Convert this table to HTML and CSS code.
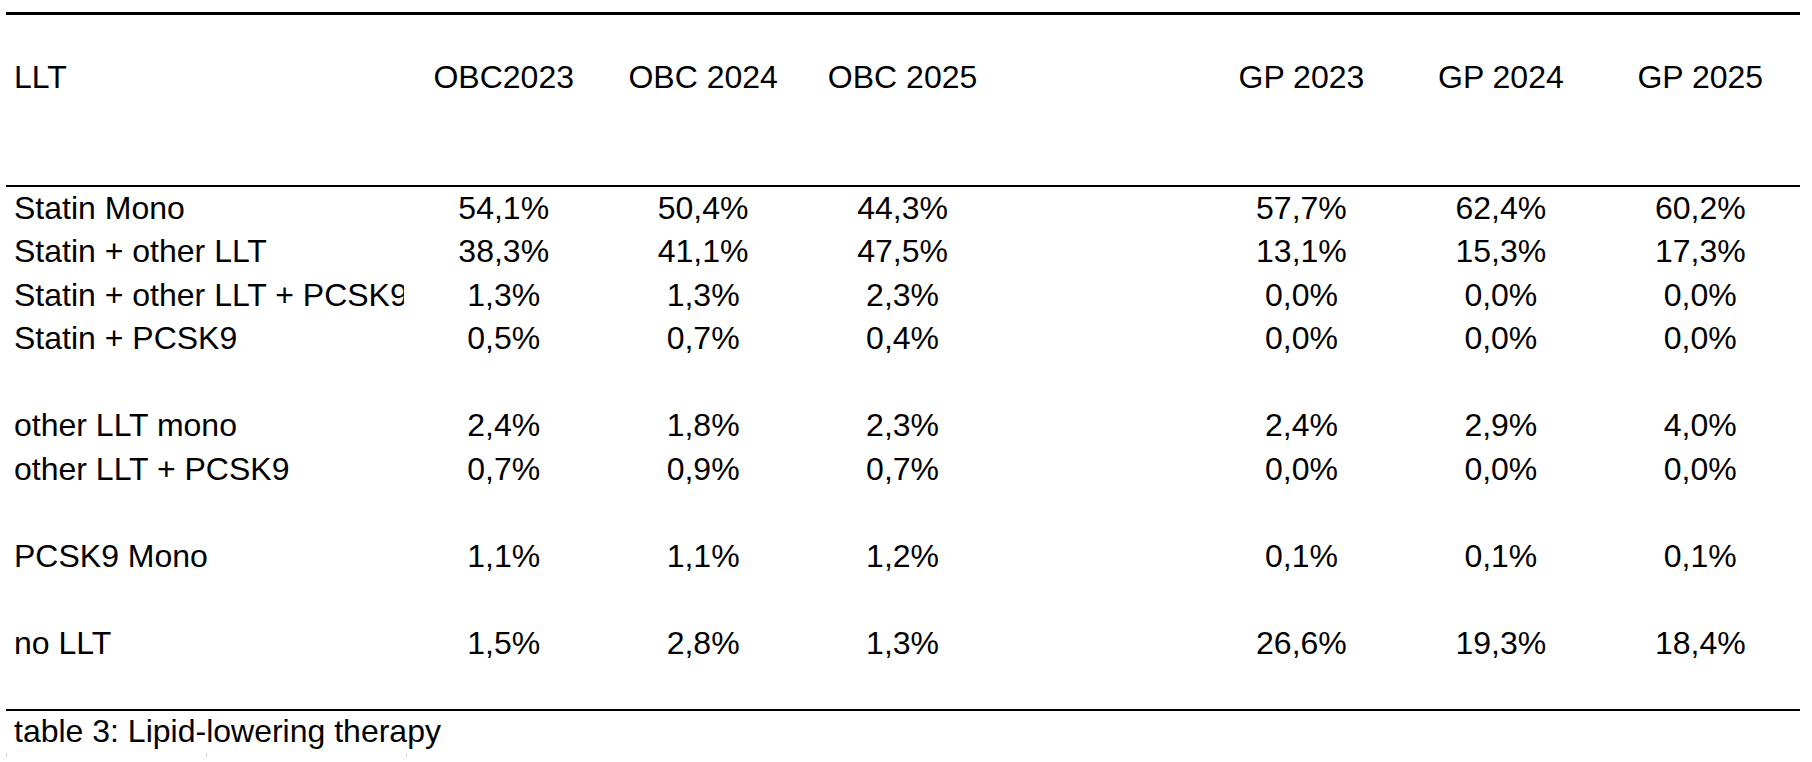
FILE: index.html
```html
<!DOCTYPE html>
<html lang="en">
<head>
<meta charset="utf-8">
<title>table 3: Lipid-lowering therapy</title>
<link rel="stylesheet" href="styles.css">
</head>
<body>
<div class="sheet">
  <div class="head">
    <div class="row">
      <div class="label">LLT</div>
      <div class="cell">OBC2023</div>
      <div class="cell">OBC 2024</div>
      <div class="cell">OBC 2025</div>
      <div class="cell"></div>
      <div class="cell">GP 2023</div>
      <div class="cell">GP 2024</div>
      <div class="cell">GP 2025</div>
    </div>
  </div>
  <div class="body">
    <div class="row">
      <div class="label">Statin Mono</div>
      <div class="cell">54,1%</div><div class="cell">50,4%</div><div class="cell">44,3%</div><div class="cell"></div>
      <div class="cell">57,7%</div><div class="cell">62,4%</div><div class="cell">60,2%</div>
    </div>
    <div class="row">
      <div class="label">Statin + other LLT</div>
      <div class="cell">38,3%</div><div class="cell">41,1%</div><div class="cell">47,5%</div><div class="cell"></div>
      <div class="cell">13,1%</div><div class="cell">15,3%</div><div class="cell">17,3%</div>
    </div>
    <div class="row">
      <div class="label">Statin + other LLT + PCSK9</div>
      <div class="cell">1,3%</div><div class="cell">1,3%</div><div class="cell">2,3%</div><div class="cell"></div>
      <div class="cell">0,0%</div><div class="cell">0,0%</div><div class="cell">0,0%</div>
    </div>
    <div class="row">
      <div class="label">Statin + PCSK9</div>
      <div class="cell">0,5%</div><div class="cell">0,7%</div><div class="cell">0,4%</div><div class="cell"></div>
      <div class="cell">0,0%</div><div class="cell">0,0%</div><div class="cell">0,0%</div>
    </div>
    <div class="row blank"></div>
    <div class="row">
      <div class="label">other LLT mono</div>
      <div class="cell">2,4%</div><div class="cell">1,8%</div><div class="cell">2,3%</div><div class="cell"></div>
      <div class="cell">2,4%</div><div class="cell">2,9%</div><div class="cell">4,0%</div>
    </div>
    <div class="row">
      <div class="label">other LLT + PCSK9</div>
      <div class="cell">0,7%</div><div class="cell">0,9%</div><div class="cell">0,7%</div><div class="cell"></div>
      <div class="cell">0,0%</div><div class="cell">0,0%</div><div class="cell">0,0%</div>
    </div>
    <div class="row blank"></div>
    <div class="row">
      <div class="label">PCSK9 Mono</div>
      <div class="cell">1,1%</div><div class="cell">1,1%</div><div class="cell">1,2%</div><div class="cell"></div>
      <div class="cell">0,1%</div><div class="cell">0,1%</div><div class="cell">0,1%</div>
    </div>
    <div class="row blank"></div>
    <div class="row">
      <div class="label">no LLT</div>
      <div class="cell">1,5%</div><div class="cell">2,8%</div><div class="cell">1,3%</div><div class="cell"></div>
      <div class="cell">26,6%</div><div class="cell">19,3%</div><div class="cell">18,4%</div>
    </div>
    <div class="row blank"></div>
  </div>
  <div class="caption">table 3: Lipid-lowering therapy</div>
  <div class="ticks">
    <span class="tick"></span>
    <span class="tick"></span>
    <span class="tick"></span>
  </div>
</div>
</body>
</html>
```
FILE: styles.css
```css
html, body {
  margin: 0;
  padding: 0;
  background: #ffffff;
}

body {
  font-family: "Liberation Sans", Arial, Helvetica, sans-serif;
  font-size: 32px;
  color: #000000;
}

.sheet {
  width: 1794px;
  margin-left: 6px;
  padding-top: 12px;
}

.head {
  border-top: 3px solid #000000;
  border-bottom: 2px solid #000000;
  padding-top: 41px;
  padding-bottom: 85px;
}

.row {
  display: grid;
  grid-template-columns: 398px repeat(7, 1fr);
  height: 43.5px;
  line-height: 43.5px;
}

.body {
  border-bottom: 2px solid #000000;
}

.label {
  padding-left: 8px;
  white-space: nowrap;
  overflow: hidden;
}

.cell {
  text-align: center;
  white-space: nowrap;
}

.caption {
  padding-left: 8px;
  height: 40px;
  line-height: 40px;
  white-space: nowrap;
}

.ticks {
  display: flex;
  margin-top: 2px;
}

.tick {
  width: 1px;
  height: 4px;
  background: #d4d4d4;
  margin-right: 199px;
}
```
